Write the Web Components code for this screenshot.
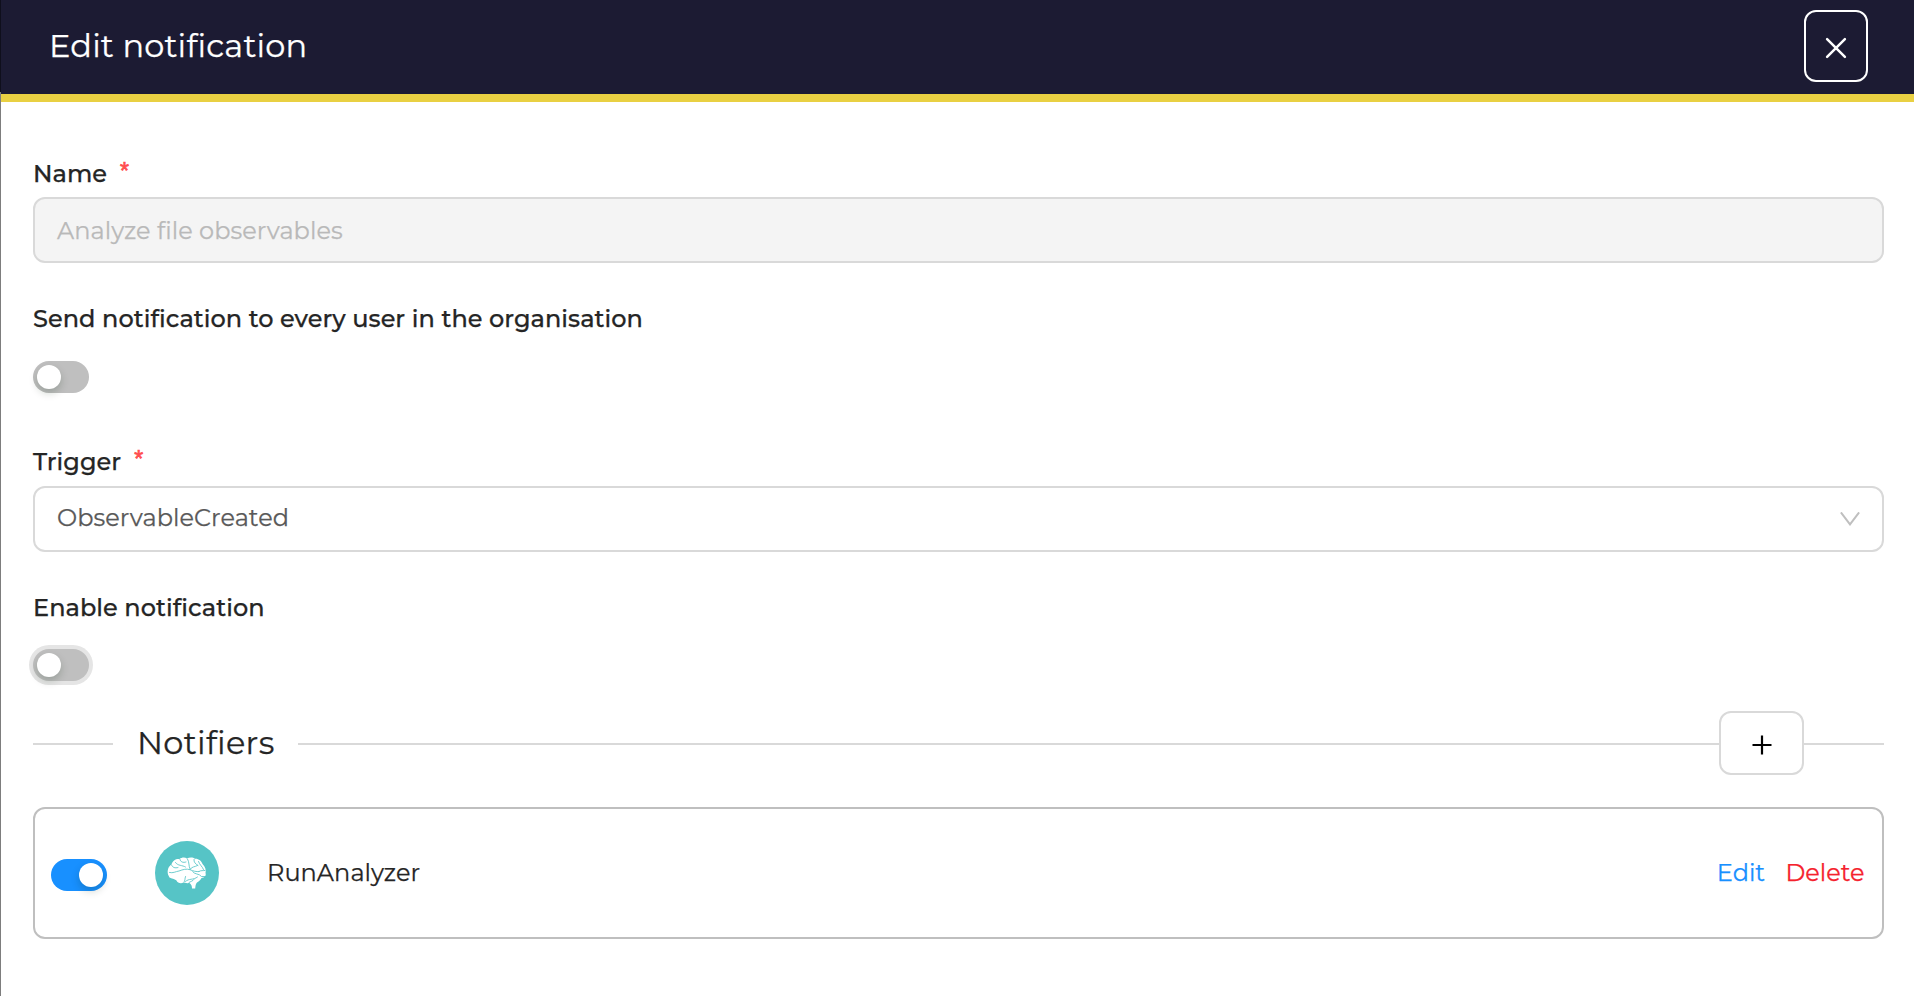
<!DOCTYPE html>
<html lang="en">
<head>
<meta charset="utf-8">
<title>Edit notification</title>
<style>
html, body { margin: 0; height: 100%; background: #fff; overflow: hidden; }
body { font: 400 24px/32px Montserrat, Inter, "Open Sans", sans-serif; color: #252525; font-variant-ligatures: none; letter-spacing: .05px; -webkit-text-stroke: .25px; }
</style>
</head>
<body>
<notification-drawer></notification-drawer>
<script>
const define = (name, html) => customElements.define(name, class extends HTMLElement {
  constructor() {
    super();
    const t = document.createElement('template');
    t.innerHTML = html;
    this.attachShadow({ mode: 'open' }).append(t.content.cloneNode(true));
  }
});

define('drawer-header', `
<style>
:host { display: flex; box-sizing: border-box; height: 102px; padding: 0 46px 2px 48px; align-items: center; justify-content: space-between; background: #1c1b33; border-bottom: 8px solid #e9d043; color: #fff; }
h1 { margin: 0; font-size: 32px; font-weight: 400; line-height: 40px; letter-spacing: .17px; }
button { width: 64px; height: 72px; box-sizing: border-box; padding: 0; border: 2px solid #fff; border-radius: 12px; background: none; display: grid; place-items: center; }
svg { display: block; margin-top: 4px; }
</style>
<h1><slot></slot></h1>
<button aria-label="Close"><svg width="22" height="22" viewBox="0 0 22 22" fill="none" stroke="#fff" stroke-width="2.5" stroke-linecap="round"><path d="M2.1 2.1 19.9 19.9M19.9 2.1 2.1 19.9"/></svg></button>`);

define('form-label', `
<style>
:host { display: flex; height: 32px; font-weight: 500; white-space: nowrap; }
i { display: none; font: 400 23px/26px "Liberation Sans", sans-serif; color: #ff4d4f; margin-left: 13px; }
:host([required]) i { display: block; -webkit-text-stroke: .7px #ff4d4f; }
</style>
<span><slot></slot></span><i>*</i>`);

define('toggle-switch', `
<style>
:host { display: block; box-sizing: border-box; width: 56px; height: 32px; padding: 4px; border-radius: 16px; background: #bfbfbf; }
:host([focused]) { box-shadow: 0 0 0 4px #e5e5e5; }
:host([on]) { background: #1890ff; }
b { display: block; width: 24px; height: 24px; border-radius: 50%; background: #fff; box-shadow: 0 4px 8px rgba(0,35,11,.2); }
:host([on]) b { margin-left: 24px; }
</style><b></b>`);

define('form-field', `
<style>
:host { display: flex; box-sizing: border-box; height: 66px; padding: 0 22px; align-items: center; justify-content: space-between; border: 2px solid #d9d9d9; border-radius: 12px; background: #fff; color: #595959; }
:host([disabled]) { background: #f4f4f4; color: #b9b9b9; }
span { margin-top: 2px; }
svg { display: none; }
:host([select]) svg { display: block; margin-top: -1px; }
:host([select]) span { margin-top: -3px; }
</style>
<span><slot></slot></span>
<svg width="20" height="14" viewBox="0 0 20 14" fill="none" stroke="#bfbfbf" stroke-width="2"><path d="M.9 .4 10 12.4 19.1 .4"/></svg>`);

define('section-divider', `
<style>
:host { display: flex; height: 64px; align-items: center; }
.l { height: 2px; background: #d9d9d9; margin-top: 2px; width: 80px; }
.g { flex: 1; }
h2 { margin: 0 24px 0 24px; width: 137px; font-size: 32px; font-weight: 400; line-height: 40px; letter-spacing: .3px; white-space: nowrap; }
button { width: 85px; height: 64px; box-sizing: border-box; padding: 0; border: 2px solid #d9d9d9; border-radius: 12px; background: #fff; display: grid; place-items: center; }
svg { display: block; margin: 4px 0 0 0; }
</style>
<div class="l"></div><h2><slot></slot></h2><div class="l g"></div>
<button aria-label="Add"><svg width="20" height="20" viewBox="0 0 20 20" stroke="#000" stroke-width="2.2"><path d="M.5 10h19M10 .5v19"/></svg></button>
<div class="l"></div>`);

define('brain-avatar', `
<style>
:host { display: grid; place-items: center; width: 64px; height: 64px; border-radius: 50%; background: #56c4c6; }
svg { display: block; }
</style>
<svg width="64" height="64" viewBox="0 0 64 64">
<path fill="#fff" d="M13 33.5C12 29 13.500 25.500 16.500 23.500C17.500 19.500 21 17.500 24.500 18C27 16 30 16 32 17.500C34.500 16 38 16 40 17.800C43.500 17.500 46.500 20 47.500 23C50 25.500 51.500 29 50.500 32C51.500 34.500 49.500 36.800 46.500 37C45.500 39 43.500 40.500 42 41.500C40.500 43 40.500 45 40.200 47.500H37C37 45.500 36.500 43.500 34.500 42C31 42.500 29.500 41.500 28.500 41.500C26 43 22.500 42 21.500 39.500C19.500 37.500 16.500 38 14.500 36.500Z"/>
<g fill="none" stroke="#56c4c6" stroke-width=".85" stroke-linecap="round">
<path d="M16.500 24C17.500 26.500 20 27.500 23 26.500M20.500 21.500C22.500 25 27.500 24 30.500 26M25 18.500C25.500 21 28 22 31 21M14.500 31.500C18 32.500 20.500 30.500 24 30C28 28.500 31.500 27.500 35 28.700C38 30 41.500 31 44 30.500"/>
<path d="M35 28.500C36.500 25.500 40 26 42.500 24.500M32.500 18C34.500 21 33.500 25 35 28M39 18.500C38.500 21 40.500 23 43 24.500M43.500 20.500C44.500 24 47.500 25.500 48.500 28.500M44 30.500C45.500 29 48.500 30 50 29.500M37.500 30.500C39 33.500 44.500 32.500 46.500 35.500H50M30.500 35.500C29.500 38 30.500 40 29 41M30.500 40.500C34 37 38 39.500 42.500 36M39 38.500C38 40 35.500 40.500 34 41.500"/>
</g></svg>`);

define('notifier-card', `
<style>
:host { display: flex; box-sizing: border-box; height: 132px; padding: 0 17.500px 0 16px; align-items: center; border: 2px solid #bfbfbf; border-radius: 12px; }
toggle-switch { margin: 4px 48px 0 0; }
.n { flex: 1; margin-left: 48px; }
.e { color: #1890ff; margin-right: 20.500px; letter-spacing: 0; }
.d { color: #f5222d; letter-spacing: 0; }
</style>
<toggle-switch on></toggle-switch><brain-avatar></brain-avatar>
<span class="n"><slot></slot></span><span class="e">Edit</span><span class="d">Delete</span>`);

define('notification-drawer', `
<style>
:host { display: flex; height: 996px; }
.edge { width: 1px; background: linear-gradient(#0f0f1c 92px, #7d7d7d 92px); }
main { flex: 1; }
section { padding: 56px 30px 0 32px; }
form-field { margin-top: 7px; }
.s1 { margin-top: 40px; } .s2 { margin-top: 53px; } .s3 { margin-top: 40px; }
.f2 { margin-top: 8px; }
section > toggle-switch { margin-top: 26px; }
section > toggle-switch[focused] { margin-top: 25px; }
section-divider { margin-top: 30px; }
notifier-card { margin-top: 32px; }
</style>
<div class="edge"></div>
<main>
<drawer-header>Edit notification</drawer-header>
<section>
<form-label required>Name</form-label>
<form-field disabled>Analyze file observables</form-field>
<form-label class="s1">Send notification to every user in the organisation</form-label>
<toggle-switch></toggle-switch>
<form-label class="s2" required>Trigger</form-label>
<form-field class="f2" select>ObservableCreated</form-field>
<form-label class="s3">Enable notification</form-label>
<toggle-switch focused></toggle-switch>
<section-divider>Notifiers</section-divider>
<notifier-card>RunAnalyzer</notifier-card>
</section>
</main>`);
</script>
</body>
</html>
